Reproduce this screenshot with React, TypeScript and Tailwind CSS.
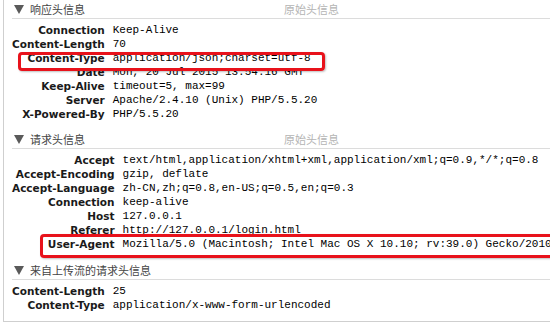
const keyFont = "font-['DejaVu_Sans',sans-serif] font-bold text-[10.5px] text-[#1a1a1a]";
const valFont = "font-['Liberation_Mono',monospace] text-[11px] text-black";

type Row = [string, string];

const responseRows: Row[] = [
  ["Connection", "Keep-Alive"],
  ["Content-Length", "70"],
  ["Content-Type", "application/json;charset=utf-8"],
  ["Date", "Mon, 20 Jul 2015 13:54:16 GMT"],
  ["Keep-Alive", "timeout=5, max=99"],
  ["Server", "Apache/2.4.10 (Unix) PHP/5.5.20"],
  ["X-Powered-By", "PHP/5.5.20"],
];

const requestRows: Row[] = [
  ["Accept", "text/html,application/xhtml+xml,application/xml;q=0.9,*/*;q=0.8"],
  ["Accept-Encoding", "gzip, deflate"],
  ["Accept-Language", "zh-CN,zh;q=0.8,en-US;q=0.5,en;q=0.3"],
  ["Connection", "keep-alive"],
  ["Host", "127.0.0.1"],
  ["Referer", "http://127.0.0.1/login.html"],
  ["User-Agent", "Mozilla/5.0 (Macintosh; Intel Mac OS X 10.10; rv:39.0) Gecko/2010"],
];

const uploadRows: Row[] = [
  ["Content-Length", "25"],
  ["Content-Type", "application/x-www-form-urlencoded"],
];

function SectionHeader({ title, raw }: { title: string; raw?: boolean }) {
  return (
    <div className="ml-[8px] flex h-[19px] items-center border-b border-[#dcdcdc] font-['Noto_Sans_CJK_SC',sans-serif] text-[11px]">
      <div className="flex w-[272px] items-center gap-[6px] pl-[2px] text-[#444]">
        <svg width="10" height="9" viewBox="0 0 10 9">
          <polygon points="0,0 10,0 5,9" fill="#5a5a5a" />
        </svg>
        <span>{title}</span>
      </div>
      {raw ? <span className="text-[#b4b4b4]">原始头信息</span> : null}
    </div>
  );
}

function HeaderTable({ rows }: { rows: Row[] }) {
  return (
    <div className="grid grid-cols-[auto_1fr] gap-x-[8px] pl-[8px] pt-[4px] leading-[14px]">
      {rows.map(([k, v]) => (
        <div key={k} className="contents">
          <span className={`${keyFont} text-right whitespace-nowrap`}>{k}</span>
          <span className={`${valFont} whitespace-nowrap`}>{v}</span>
        </div>
      ))}
    </div>
  );
}

export default function App() {
  return (
    <div className="relative h-[323px] w-[550px] overflow-hidden bg-white">
      <div className="ml-[3px] h-[322px] border-b border-l border-[#cfcfcf]">
        <SectionHeader title="响应头信息" raw />
        <HeaderTable rows={responseRows} />

        <div className="mt-[9px]">
          <SectionHeader title="请求头信息" raw />
          <HeaderTable rows={requestRows} />
        </div>

        <div className="mt-[10px]">
          <SectionHeader title="来自上传流的请求头信息" />
          <HeaderTable rows={uploadRows} />
        </div>
      </div>

      {/* highlight boxes */}
      <div className="absolute left-[18px] top-[52px] h-[19px] w-[307px] rounded-[4px] border-[3px] border-[#e8121b] shadow-[1px_1px_2px_rgba(0,0,0,0.25)]" />
      <div className="absolute left-[40px] top-[234px] h-[24px] w-[530px] rounded-[4px] border-[3px] border-[#e8121b] shadow-[1px_1px_2px_rgba(0,0,0,0.25)]" />
    </div>
  );
}
